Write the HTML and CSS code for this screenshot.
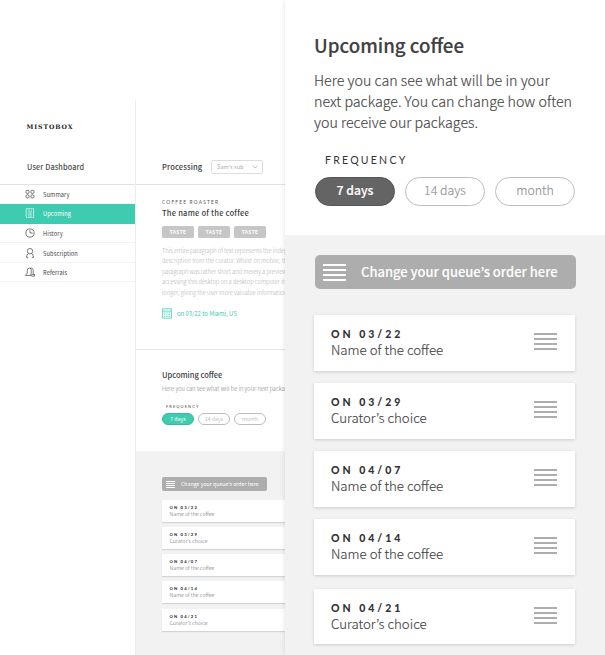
FILE: index.html
```html
<!DOCTYPE html>
<html lang="en">
<head>
<meta charset="utf-8">
<title>Mistobox</title>
<link rel="stylesheet" href="styles.css">
</head>
<body>
<div class="page">
  <aside class="sidebar">
    <div class="logo">MISTOBOX</div>
    <div class="side-title"><span>User Dashboard</span></div>
    <nav>
      <a class="item first"><svg viewBox="0 0 10 10"><rect x="1" y="1.3" width="3.1" height="3.1" rx="1.1"/><rect x="5.9" y="1.3" width="3.1" height="3.1" rx="1.1"/><rect x="1" y="5.9" width="3.1" height="3.1" rx="1.1"/><rect x="5.9" y="5.9" width="3.1" height="3.1" rx="1.1"/></svg><span>Summary</span></a>
      <a class="item active"><svg viewBox="0 0 10 10"><rect x="1.2" y="0.2" width="7.4" height="9.6" rx="1"/><path d="M3 2h2M3 4h4M3 6h4M3 8h4M6 2h1"/></svg><span>Upcoming</span></a>
      <a class="item"><svg viewBox="0 0 10 10"><circle cx="5" cy="5" r="4.1"/><path d="M5 2.2V5h2.6"/></svg><span>History</span></a>
      <a class="item"><svg viewBox="0 0 10 10"><circle cx="5" cy="3.2" r="2.7"/><path d="M3.6 5.4C2.3 6 1.7 7.400 1.500 9.400h1.600M6.400 5.400c1.300.6 1.900 2 2.100 4H6.900"/></svg><span>Subscription</span></a>
      <a class="item"><svg viewBox="0 0 10 10"><path d="M2.300 6.600V3.400a2 2.400 0 0 1 4 0v3.200M5 1.400c2-1 3.200.3 3.200 2v3.200l1.300 1H6.500M2.300 6.600.7 7.700v.8h5.600v-.8L4.800 6.600M6.500 9.200h3V7.600"/></svg><span>Referrals</span></a>
    </nav>
  </aside>

  <main class="main">
    <header class="bar">
      <h2>Processing</h2>
      <div class="select"><span>Sam’s sub</span><svg viewBox="0 0 6 4"><path d="M.5.6 3 3.100 5.500.6"/></svg></div>
    </header>
    <section class="product">
      <div class="over">COFFEE ROASTER</div>
      <h2>The name of the coffee</h2>
      <div class="tags"><span>TASTE</span><span>TASTE</span><span>TASTE</span></div>
      <p>This entire paragraph of text represents the indepth<br>description from the curator. Whilst on mobile, the<br>paragraph was rather short and merely a preview,<br>accessing this desktop on a desktop computer it is<br>longer, giving the user more valuable information.</p>
      <div class="ship"><svg viewBox="0 0 10 11"><path d="M.6.800h8.800v9.400H.6zM.6 3.100h8.800"/><path class="dots" d="M2 4.900h6M2 6.700h6M2 8.500h6"/></svg><span>on 03/22 to Miami, US</span></div>
    </section>
    <section class="plan">
      <h2>Upcoming coffee</h2>
      <p>Here you can see what will be in your next package.</p>
      <div class="freq">FREQUENCY</div>
      <div class="pills"><span class="on">7 days</span><span>14 days</span><span>month</span></div>
    </section>
    <section class="queue">
      <div class="change"><i class="lines"></i><span>Change your queue’s order here</span></div>
      <article class="card"><b>ON 03/22</b><span>Name of the coffee</span></article>
      <article class="card"><b>ON 03/29</b><span>Curator’s choice</span></article>
      <article class="card"><b>ON 04/07</b><span>Name of the coffee</span></article>
      <article class="card"><b>ON 04/14</b><span>Name of the coffee</span></article>
      <article class="card last"><b>ON 04/21</b><span>Curator’s choice</span></article>
    </section>
  </main>

  <section class="panel">
    <div class="intro">
      <h1>Upcoming coffee</h1>
      <p>Here you can see what will be in your<br>next package. You can change how often<br>you receive our packages.</p>
      <div class="freq">FREQUENCY</div>
      <div class="pills"><span class="on">7 days</span><span>14 days</span><span>month</span></div>
    </div>
    <div class="queue">
      <div class="change"><i class="lines"></i><span>Change your queue’s order here</span></div>
      <article class="card"><div><b>ON 03/22</b><span>Name of the coffee</span></div><i class="lines"></i></article>
      <article class="card"><div><b>ON 03/29</b><span>Curator’s choice</span></div><i class="lines"></i></article>
      <article class="card"><div><b>ON 04/07</b><span>Name of the coffee</span></div><i class="lines"></i></article>
      <article class="card"><div><b>ON 04/14</b><span>Name of the coffee</span></div><i class="lines"></i></article>
      <article class="card last"><div><b>ON 04/21</b><span>Curator’s choice</span></div><i class="lines"></i></article>
    </div>
  </section>
</div>
</body>
</html>
```
FILE: styles.css
```css
* { box-sizing: border-box; }
body { margin: 0; background: #fff; color: #4a4a4a; font-family: "Noto Sans CJK KR", "Noto Sans", sans-serif; overflow: hidden; }
h1, h2, p { margin: 0; white-space: nowrap; }
svg { fill: none; stroke: currentColor; flex: none; }
.page { display: grid; grid-template-columns: 136px 149px 320px; height: 655px; overflow: hidden; }

.sidebar { margin-top: 100px; border-right: 1px solid #ececec; }
.logo { height: 54px; padding: 21px 0 0 26.500px; font: bold 6.200px/12px "DejaVu Serif", serif; letter-spacing: 0.9px; color: #222; }
.side-title { height: 30.500px; padding: 7px 0 0 27px; border-bottom: 1px solid #e2e2e2; font-size: 7.300px; line-height: 12px; font-weight: 500; letter-spacing: 0.12px; }
.item { display: flex; align-items: center; gap: 8px; height: 19.6px; padding-left: 25px; border-bottom: 1px solid #f3f3f3; font-size: 5.700px; line-height: 10px; letter-spacing: 0.1px; color: #444; }
.item span { padding-top: 2px; }
.item svg { width: 10px; height: 10px; stroke-width: 0.7; }
.item.active { background: #3fcbb0; color: #fff; border-color: #3fcbb0; }

.main { margin-top: 100px; overflow: hidden; height: 555px; }
.main h2 { font-size: 7.600px; line-height: 12px; font-weight: 500; letter-spacing: 0.1px; color: #404040; }
.bar { display: flex; align-items: flex-start; height: 85px; padding: 60px 0 0 26px; border-bottom: 1px solid #e2e2e2; }
.bar h2 { width: 49px; padding-top: 1px; }
.select { display: flex; align-items: center; justify-content: space-between; width: 52px; height: 14px; padding: 0 4px 0 5px; border: 1px solid #ddd; border-radius: 2px; font-size: 5.500px; line-height: 10px; letter-spacing: 0.1px; color: #aaa; }
.select svg { width: 6px; height: 4px; stroke-width: 0.7; }
.product { height: 165px; padding: 13px 0 0 26px; border-bottom: 1px solid #e6e6e6; }
.over { font: 400 4.800px/9px Lato, sans-serif; letter-spacing: 1.200px; color: #555; }
.product h2 { margin-top: -1px; line-height: 13px; letter-spacing: 0.2px; }
.tags { display: flex; gap: 4px; margin-top: 7px; }
.tags span { width: 32px; height: 12px; border-radius: 1.500px; background: #c6c6c6; color: #fff; font: 900 4.800px/12px Lato, sans-serif; letter-spacing: 0.5px; text-align: center; }
.product p { margin-top: 8px; font-size: 5.700px; line-height: 10.400px; font-weight: 300; color: #aaa; }
.ship { display: flex; align-items: center; gap: 5px; margin-top: 10px; font-size: 5.900px; line-height: 11px; color: #3fcbb0; }
.ship svg { width: 10px; height: 11px; stroke-width: 0.8; }
.dots { stroke-dasharray: 1.300 1; }
.plan { height: 101px; padding: 19px 0 0 26px; }
.main .plan h2 { font-size: 7.500px; letter-spacing: 0; }
.plan p { margin-top: 2px; font-size: 5.700px; line-height: 12px; font-weight: 300; color: #777; }
.plan .freq { margin: 7px 0 0 4px; font: 400 4px/9px Lato, sans-serif; letter-spacing: 1.100px; }
.pills { display: flex; }
.pills span { border: 1px solid #bdbdbd; color: #999; text-align: center; }
.plan .pills { gap: 4px; margin-top: 2px; }
.plan .pills span { width: 32px; height: 12px; border-radius: 6px; font-size: 5.300px; line-height: 10px; font-weight: 300; }
.plan .pills .on { background: #3fcbb0; border-color: #35bda2; color: #fff; font-weight: 400; }
.queue { background: #f2f2f2; }
.main .queue { height: 204px; padding: 26px 0 0 26px; }
.change { display: flex; align-items: center; background: #adadad; color: #fff; font-weight: 500; white-space: nowrap; }
.lines { display: block; flex: none; }
.main .change { width: 105px; height: 14px; margin-bottom: 9px; padding-left: 4px; gap: 6px; border-radius: 2px; font-size: 5.250px; line-height: 10px; font-weight: 400; }
.main .lines { width: 9px; height: 7px; background: repeating-linear-gradient(#fff 0 1px, transparent 1px 2px); }
.card { background: #fff; }
.card b, .card span { display: block; white-space: nowrap; }
.main .card { height: 22px; margin-bottom: 5px; padding: 5px 0 0 7.500px; box-shadow: 0 1px 1px rgba(0,0,0,.12); }
.main .card.last { margin-top: 6px; }
.main .card b { font: 900 4.200px/6px Lato, sans-serif; letter-spacing: 1.150px; color: #333; }
.main .card span { font-size: 5.300px; line-height: 7px; font-weight: 300; color: #666; }

.panel { position: relative; background: #fff; box-shadow: 0 0 5px rgba(0,0,0,.12); height: 655px; overflow: visible; }
.intro { height: 235px; padding: 31px 0 0 29px; }
.intro h1 { font-size: 18.700px; line-height: 28px; font-weight: 500; color: #404040; -webkit-text-stroke: 0.15px; }
.intro p { margin-top: 10px; font-size: 14.240px; line-height: 21.200px; font-weight: 300; color: #444; -webkit-text-stroke: 0.15px; }
.intro .freq { margin: 20.400px 0 0 11px; font: 400 10.500px/14px Lato, sans-serif; letter-spacing: 2.250px; color: #333; }
.intro .pills { gap: 10px; margin: 10px 0 0 1px; }
.intro .pills span { width: 80px; height: 29px; border-radius: 15px; font-size: 12.400px; line-height: 25px; font-weight: 300; color: #909090; -webkit-text-stroke: 0.15px; }
.intro .pills .on { background: #646464; border-color: #555; color: #fff; font-weight: 500; font-size: 12.200px; }
.panel .queue { height: 420px; padding: 20px 0 0 29px; }
.panel .change { width: 261px; height: 34px; margin: 0 0 26px 1px; padding-left: 8px; gap: 15px; border-radius: 5px; font-size: 12.970px; line-height: 20px; -webkit-text-stroke: 0.1px; }
.panel .lines { width: 23px; height: 17px; background: repeating-linear-gradient(#adadad 0 2px, transparent 2px 5px); }
.panel .change .lines { background: repeating-linear-gradient(#fff 0 2px, transparent 2px 5px); }
.panel .card { display: flex; justify-content: space-between; width: 261px; height: 56px; margin-bottom: 12px; padding: 12px 18px 0 17px; box-shadow: 0 1px 3px rgba(0,0,0,.16); }
.panel .card.last { margin-top: 14px; height: 55px; }
.panel .card .lines { margin-top: 6px; }
.panel .card b { font: 900 10.500px/15px Lato, sans-serif; letter-spacing: 3px; color: #333; }
.panel .card span { font-size: 13.250px; line-height: 16px; font-weight: 300; color: #444; -webkit-text-stroke: 0.15px; }
```
